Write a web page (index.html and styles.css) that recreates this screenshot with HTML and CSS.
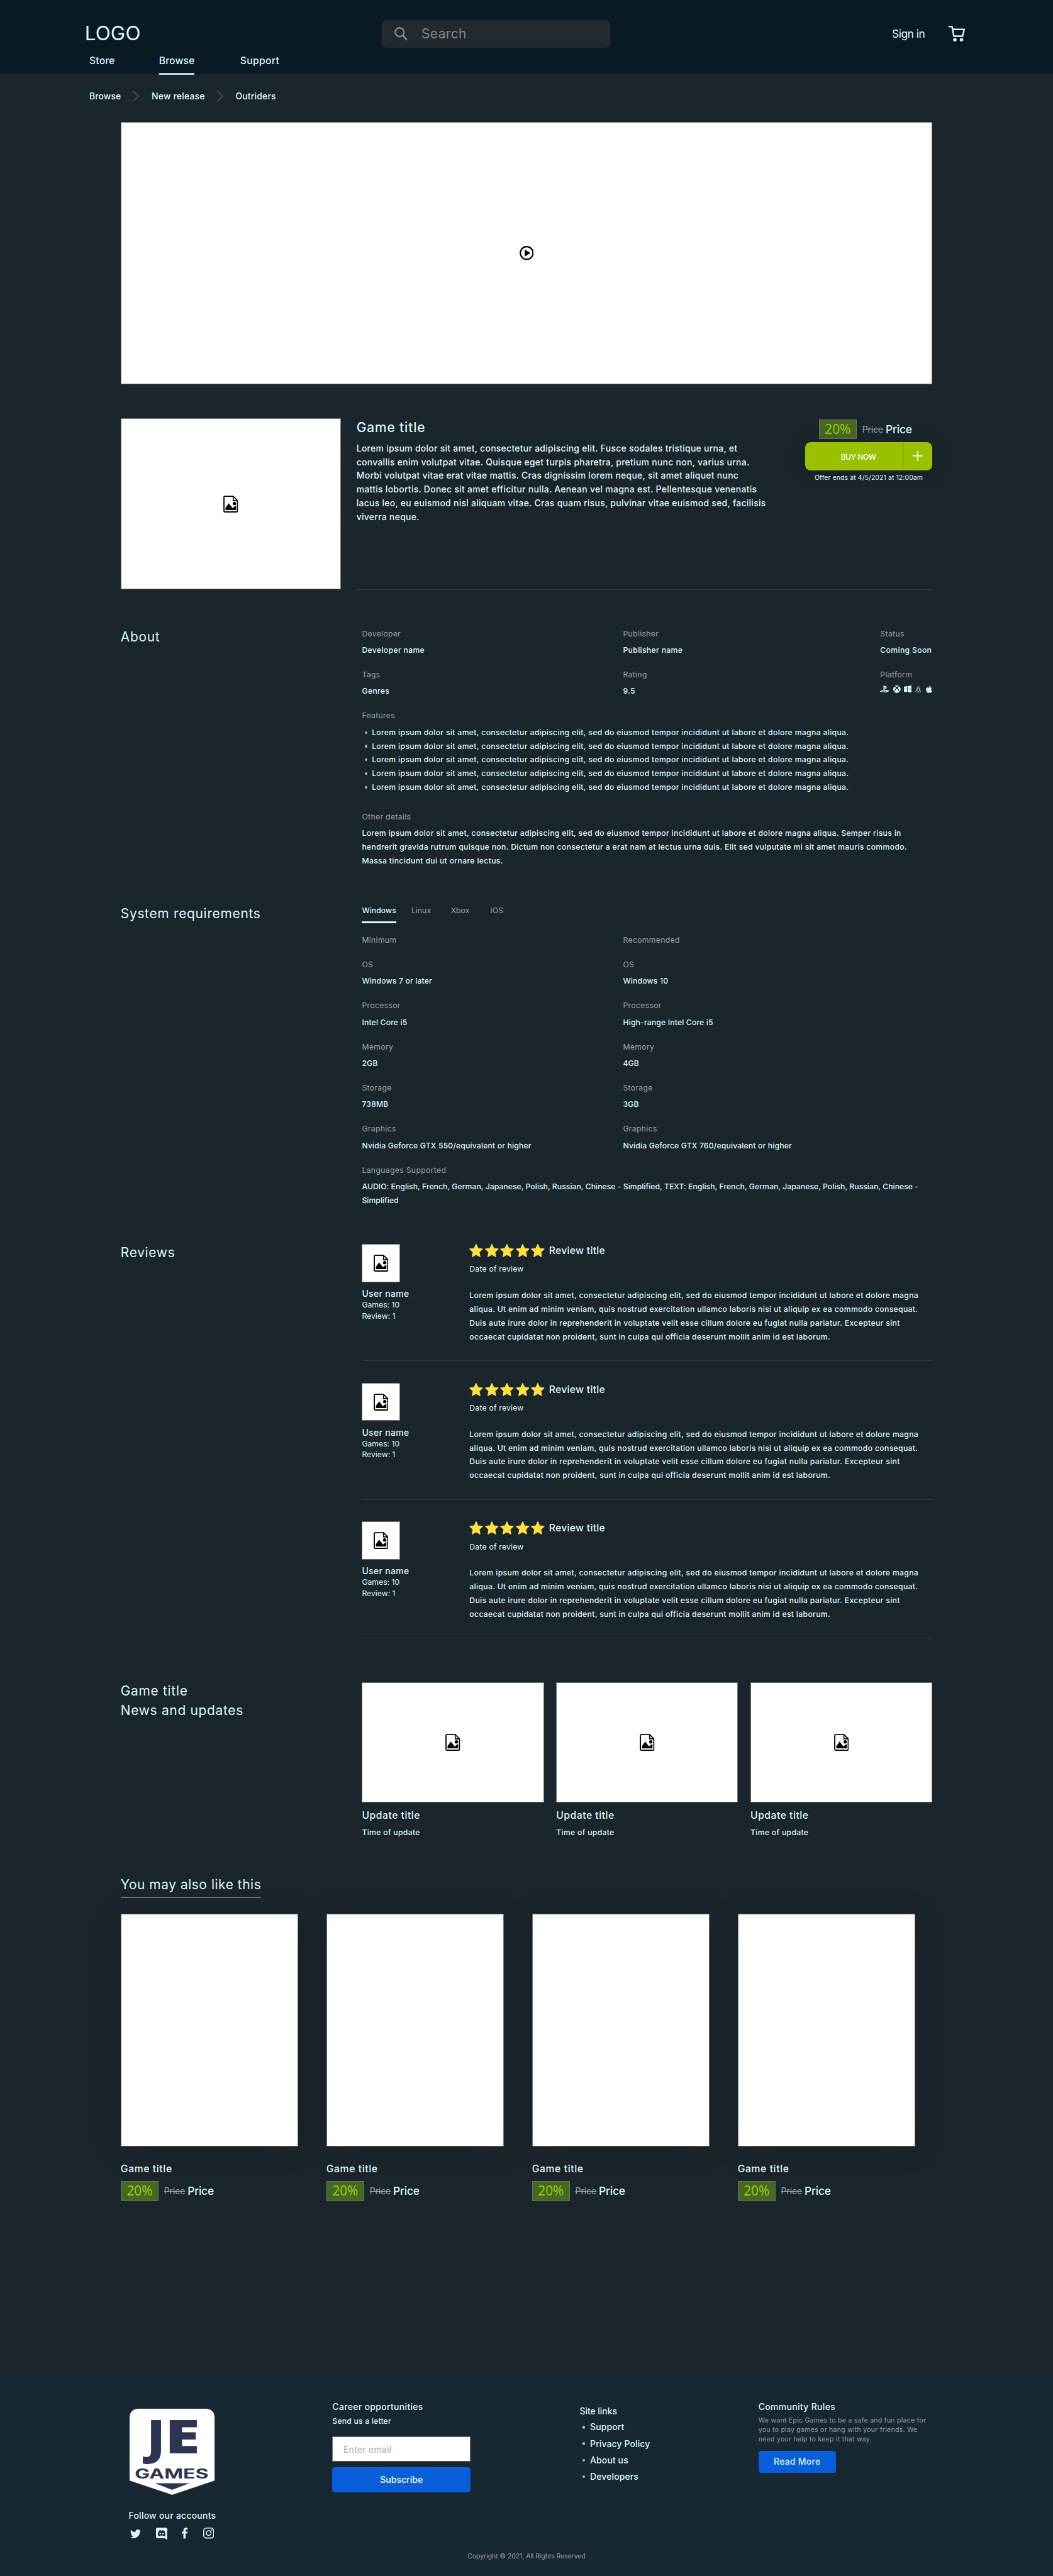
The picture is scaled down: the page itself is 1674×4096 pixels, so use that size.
FILE: index.html
```html
<!DOCTYPE html>
<html lang="en">
<head>
<meta charset="utf-8">
<title>JE Games - Game title</title>
<link rel="stylesheet" href="styles.css">
</head>
<body>
<svg class="sprite" aria-hidden="true">
  <symbol id="i-image" viewBox="0 0 27 31">
    <path d="M3 1.200H18L25.800 9V28a1.800 1.800 0 0 1-1.800 1.800H3A1.800 1.800 0 0 1 1.200 28V3A1.800 1.800 0 0 1 3 1.200z" fill="none" stroke="currentColor" stroke-width="2.100"/>
    <path d="M18 1.200V9H25.800" fill="none" stroke="currentColor" stroke-width="1.800"/>
    <circle cx="20.200" cy="14.600" r="3"/>
    <path d="M4 26.500V22.500L10 14l7 9 3-2.500L23.200 18.500V26.500z"/>
  </symbol>
  <symbol id="i-star" viewBox="0 0 25 24.500">
    <path d="M12.500 .8L15.900 8.200 24 9.200 18 14.700 19.600 23.200 12.500 19.200 5.400 23.200 7 14.700 1 9.200 9.100 8.200z" stroke="currentColor" stroke-width="1.500" stroke-linejoin="round"/>
  </symbol>
</svg>

<header class="header">
  <div class="header-top">
    <a class="logo">LOGO</a>
    <div class="search">
      <svg viewBox="0 0 24 25"><circle cx="9.500" cy="9.500" r="8" fill="none" stroke="currentColor" stroke-width="2.800"/><path d="M15.500 15.500L22.500 23.500" stroke="currentColor" stroke-width="3.200"/></svg>
      <span>Search</span>
    </div>
    <a class="signin">Sign in</a>
    <svg class="cart" viewBox="0 0 30 29"><path d="M0 1.600H6.500L9.500 19H25.500L28.500 6.500H7.500" fill="none" stroke="currentColor" stroke-width="2.800" stroke-linejoin="round"/><circle cx="11.500" cy="25.500" r="3.200"/><circle cx="23.500" cy="25.500" r="3.200"/></svg>
  </div>
  <nav class="nav"><a>Store</a><a class="active">Browse</a><a class="wide">Support</a></nav>
</header>

<div class="crumbs">
  <span class="c1">Browse</span>
  <svg viewBox="0 0 11 20"><path d="M0.500 0.300L10.500 10L0.500 19.700"/></svg>
  <span class="c2">New release</span>
  <svg viewBox="0 0 11 20"><path d="M0.500 0.300L10.500 10L0.500 19.700"/></svg>
  <span>Outriders</span>
</div>

<main class="main">
  <div class="hero box">
    <svg class="play" viewBox="0 0 26 26"><circle cx="13" cy="13" r="11.600" fill="none" stroke="currentColor" stroke-width="2.600"/><path d="M9.500 6.800L20 13L9.500 19.200z"/></svg>
  </div>

  <section class="detail">
    <div class="cover box"><svg class="file"><use href="#i-image"/></svg></div>
    <div class="detail-body">
      <div class="intro">
        <h1>Game title</h1>
        <p>Lorem ipsum dolor sit amet, consectetur adipiscing elit. Fusce sodales tristique urna, et<br>convallis enim volutpat vitae. Quisque eget turpis pharetra, pretium nunc non, varius urna.<br>Morbi volutpat vitae erat vitae mattis. Cras dignissim lorem neque, sit amet aliquet nunc<br>mattis lobortis. Donec sit amet efficitur nulla. Aenean vel magna est. Pellentesque venenatis<br>lacus leo, eu euismod nisl aliquam vitae. Cras quam risus, pulvinar vitae euismod sed, facilisis<br>viverra neque.</p>
      </div>
      <div class="buy">
        <div class="price"><span class="off">20%</span><s>Price</s><b>Price</b></div>
        <div class="buy-btn"><span>BUY NOW</span><i><svg viewBox="0 0 18 18"><path d="M9 0V18M0 9H18"/></svg></i></div>
        <div class="offer">Offer ends at 4/5/2021 at 12:00am</div>
      </div>
    </div>
  </section>

  <section class="row about">
    <h2>About</h2>
    <div>
      <div class="cols">
        <dl><dt>Developer</dt><dd>Developer name</dd><dt>Tags</dt><dd>Genres</dd></dl>
        <dl><dt>Publisher</dt><dd>Publisher name</dd><dt>Rating</dt><dd>9.5</dd></dl>
        <dl><dt>Status</dt><dd>Coming Soon</dd><dt>Platform</dt>
          <dd class="platforms">
            <svg class="ps" viewBox="0 0 17 13"><path d="M6.300 0l3.400 1c1.700.6 2.400 1.300 2.400 3 0 1.800-1.100 2.500-2.600 1.800V2.600c0-.8-.9-.9-.9 0V13L6.300 12.200zM5.700 7.800v1.500L2.900 10.400c-.7.3 0 .8.700.5l2.100-.7v1.400c-1.700.5-3.500.5-5-.1-1-.5-.9-1.400.5-1.900zM9.200 8.600c2-.6 4.800-.8 6.800.2 1.200.5 1.200 1.400.1 1.800l-6.900 2.300v-1.600l5-1.700c.7-.3 0-.7-.7-.5L9.200 10.300z"/></svg>
            <svg class="xb" viewBox="0 0 13 13"><path d="M2.300 1.500C3.800.9 5.300 1.600 6.500 2.500 7.700 1.600 9.200.9 10.700 1.500 8.300-.5 4.700-.5 2.300 1.500zM1.700 2.200C-.7 5-.4 8.800 1.700 11 2 8.500 3.600 6.100 5.100 4.300 4 3 2.800 2 1.700 2.200zM11.300 2.200C13.700 5 13.400 8.800 11.300 11 11 8.500 9.400 6.100 7.900 4.300 9 3 10.200 2 11.300 2.200zM6.500 5.500C4.500 7.200 2.500 9.800 2.300 11.500c2.400 2 6 2 8.400 0C10.500 9.800 8.500 7.200 6.500 5.500z"/></svg>
            <svg class="win" viewBox="0 0 14 13"><path d="M0 2L6 1.100V6.200H0zM6.800 1L14 0V6.200H6.800zM0 6.900H6V12L0 11.200zM6.800 6.900H14V13L6.800 12z"/></svg>
            <svg class="tux" viewBox="0 0 11 13"><path d="M4 3.800C3.500.8 7.500.8 7 3.800 7 5.500 9 7 9.300 9.500L10.300 11 8 12.400H3L.7 11 1.800 9.500C2 7 4 5.500 4 3.800zM4.300 4.500L3.300 8.500C3.500 10 4 11 5.500 11S7.500 10 7.800 8.500L6.800 4.500" fill="none" stroke="currentColor" stroke-width=".8"/></svg>
            <svg class="apl" viewBox="0 0 12 14"><path d="M8.600 0C8.700 1.700 7.300 3.200 5.900 3.200 5.800 1.700 7.200.2 8.600 0zM11.400 4.900C9 6.400 9.500 9.200 11.800 10.200 11 12.300 9.900 14 8.600 14 7.600 14 7.400 13.400 6.200 13.400S4.600 14 3.700 14C1.500 13.500-.4 9 .5 6.300 1 4.500 2.400 3.600 3.800 3.600 4.800 3.600 5.500 4.200 6.300 4.200S7.700 3.500 9 3.500C10 3.600 10.800 4 11.400 4.900z"/></svg>
          </dd></dl>
      </div>
      <dl>
        <dt>Features</dt>
        <dd><ul class="features">
          <li>Lorem ipsum dolor sit amet, consectetur adipiscing elit, sed do eiusmod tempor incididunt ut labore et dolore magna aliqua.</li>
          <li>Lorem ipsum dolor sit amet, consectetur adipiscing elit, sed do eiusmod tempor incididunt ut labore et dolore magna aliqua.</li>
          <li>Lorem ipsum dolor sit amet, consectetur adipiscing elit, sed do eiusmod tempor incididunt ut labore et dolore magna aliqua.</li>
          <li>Lorem ipsum dolor sit amet, consectetur adipiscing elit, sed do eiusmod tempor incididunt ut labore et dolore magna aliqua.</li>
          <li>Lorem ipsum dolor sit amet, consectetur adipiscing elit, sed do eiusmod tempor incididunt ut labore et dolore magna aliqua.</li>
        </ul></dd>
        <dt>Other details</dt>
        <dd>Lorem ipsum dolor sit amet, consectetur adipiscing elit, sed do eiusmod tempor incididunt ut labore et dolore magna aliqua. Semper risus in<br>hendrerit gravida rutrum quisque non. Dictum non consectetur a erat nam at lectus urna duis. Elit sed vulputate mi sit amet mauris commodo.<br>Massa tincidunt dui ut ornare lectus.</dd>
      </dl>
    </div>
  </section>

  <section class="row system">
    <h2>System requirements</h2>
    <div>
      <div class="tabs"><span class="active">Windows</span><span>Linux</span><span>Xbox</span><span>IOS</span></div>
      <div class="cols two">
        <dl><dt class="solo">Minimum</dt><dt>OS</dt><dd class="mid">Windows 7 or later</dd><dt>Processor</dt><dd class="mid">Intel Core i5</dd><dt>Memory</dt><dd class="mid">2GB</dd><dt>Storage</dt><dd class="mid">738MB</dd><dt>Graphics</dt><dd class="mid">Nvidia Geforce GTX 550/equivalent or higher</dd></dl>
        <dl><dt class="solo">Recommended</dt><dt>OS</dt><dd class="mid">Windows 10</dd><dt>Processor</dt><dd class="mid">High-range Intel Core i5</dd><dt>Memory</dt><dd class="mid">4GB</dd><dt>Storage</dt><dd class="mid">3GB</dd><dt>Graphics</dt><dd class="mid">Nvidia Geforce GTX 760/equivalent or higher</dd></dl>
      </div>
      <dl><dt>Languages Supported</dt><dd class="langs">AUDIO: English, French, German, Japanese, Polish, Russian, Chinese - Simplified, TEXT: English, French, German, Japanese, Polish, Russian, Chinese -<br>Simplified</dd></dl>
    </div>
  </section>

  <section class="row reviews">
    <h2>Reviews</h2>
    <div>
      <article class="review">
        <div class="user"><div class="avatar box"><svg class="file"><use href="#i-image"/></svg></div><strong>User name</strong><span>Games: 10</span><span>Review: 1</span></div>
        <div class="review-body">
          <div class="rate"><svg><use href="#i-star"/></svg><svg><use href="#i-star"/></svg><svg><use href="#i-star"/></svg><svg><use href="#i-star"/></svg><svg><use href="#i-star"/></svg><h3>Review title</h3></div>
          <time>Date of review</time>
          <p>Lorem ipsum dolor sit amet, consectetur adipiscing elit, sed do eiusmod tempor incididunt ut labore et dolore magna<br>aliqua. Ut enim ad minim veniam, quis nostrud exercitation ullamco laboris nisi ut aliquip ex ea commodo consequat.<br>Duis aute irure dolor in reprehenderit in voluptate velit esse cillum dolore eu fugiat nulla pariatur. Excepteur sint<br>occaecat cupidatat non proident, sunt in culpa qui officia deserunt mollit anim id est laborum.</p>
        </div>
      </article>
      <article class="review">
        <div class="user"><div class="avatar box"><svg class="file"><use href="#i-image"/></svg></div><strong>User name</strong><span>Games: 10</span><span>Review: 1</span></div>
        <div class="review-body">
          <div class="rate"><svg><use href="#i-star"/></svg><svg><use href="#i-star"/></svg><svg><use href="#i-star"/></svg><svg><use href="#i-star"/></svg><svg><use href="#i-star"/></svg><h3>Review title</h3></div>
          <time>Date of review</time>
          <p>Lorem ipsum dolor sit amet, consectetur adipiscing elit, sed do eiusmod tempor incididunt ut labore et dolore magna<br>aliqua. Ut enim ad minim veniam, quis nostrud exercitation ullamco laboris nisi ut aliquip ex ea commodo consequat.<br>Duis aute irure dolor in reprehenderit in voluptate velit esse cillum dolore eu fugiat nulla pariatur. Excepteur sint<br>occaecat cupidatat non proident, sunt in culpa qui officia deserunt mollit anim id est laborum.</p>
        </div>
      </article>
      <article class="review">
        <div class="user"><div class="avatar box"><svg class="file"><use href="#i-image"/></svg></div><strong>User name</strong><span>Games: 10</span><span>Review: 1</span></div>
        <div class="review-body">
          <div class="rate"><svg><use href="#i-star"/></svg><svg><use href="#i-star"/></svg><svg><use href="#i-star"/></svg><svg><use href="#i-star"/></svg><svg><use href="#i-star"/></svg><h3>Review title</h3></div>
          <time>Date of review</time>
          <p>Lorem ipsum dolor sit amet, consectetur adipiscing elit, sed do eiusmod tempor incididunt ut labore et dolore magna<br>aliqua. Ut enim ad minim veniam, quis nostrud exercitation ullamco laboris nisi ut aliquip ex ea commodo consequat.<br>Duis aute irure dolor in reprehenderit in voluptate velit esse cillum dolore eu fugiat nulla pariatur. Excepteur sint<br>occaecat cupidatat non proident, sunt in culpa qui officia deserunt mollit anim id est laborum.</p>
        </div>
      </article>
    </div>
  </section>

  <section class="row news">
    <h2>Game title<br>News and updates</h2>
    <div class="updates">
      <article><div class="shot box"><svg class="file"><use href="#i-image"/></svg></div><h3>Update title</h3><time>Time of update</time></article>
      <article><div class="shot box"><svg class="file"><use href="#i-image"/></svg></div><h3>Update title</h3><time>Time of update</time></article>
      <article><div class="shot box"><svg class="file"><use href="#i-image"/></svg></div><h3>Update title</h3><time>Time of update</time></article>
    </div>
  </section>

  <section class="also">
    <h2>You may also like this</h2>
    <div class="games">
      <article><div class="art box"></div><h3>Game title</h3><div class="price"><span class="off">20%</span><s>Price</s><b>Price</b></div></article>
      <article><div class="art box"></div><h3>Game title</h3><div class="price"><span class="off">20%</span><s>Price</s><b>Price</b></div></article>
      <article><div class="art box"></div><h3>Game title</h3><div class="price"><span class="off">20%</span><s>Price</s><b>Price</b></div></article>
      <article><div class="art box"></div><h3>Game title</h3><div class="price"><span class="off">20%</span><s>Price</s><b>Price</b></div></article>
    </div>
  </section>
</main>

<footer class="footer">
  <div class="footer-cols">
    <div class="brand">
      <svg class="shield" viewBox="0 0 155 157">
        <path d="M18 0H137Q155 0 155 17V131L77.500 157L0 131V17Q0 0 18 0z" fill="#fff"/>
        <text x="31.500" y="81" class="je" textLength="33" lengthAdjust="spacingAndGlyphs">J</text>
        <text x="64.300" y="81" class="je" textLength="64" lengthAdjust="spacingAndGlyphs">E</text>
        <text x="9.500" y="127" class="je-g" textLength="134.500" lengthAdjust="spacingAndGlyphs">GAMES</text>
        <path d="M46 136H109L77.500 148z" fill="#2d3552"/>
      </svg>
      <h4>Follow our accounts</h4>
      <div class="social">
        <svg class="tw" viewBox="0 0 24 19.500"><path d="M24 2.300a10 10 0 0 1-2.800.8A5 5 0 0 0 23.300.4a10 10 0 0 1-3.100 1.200A4.900 4.900 0 0 0 11.800 6 14 14 0 0 1 1.700.9a4.900 4.900 0 0 0 1.500 6.600A5 5 0 0 1 1 6.900a4.900 4.900 0 0 0 3.900 4.900 5 5 0 0 1-2.200.1 4.900 4.900 0 0 0 4.600 3.400A9.900 9.900 0 0 1 0 17.300a14 14 0 0 0 21.500-12.400A10 10 0 0 0 24 2.300z"/></svg>
        <svg class="dc" viewBox="0 0 21 23"><path fill-rule="evenodd" d="M2.400 0H18.600A2.400 2.400 0 0 1 21 2.400V23L16.500 19.600H2.400A2.400 2.400 0 0 1 0 17.200V2.400A2.400 2.400 0 0 1 2.400 0zM5.200 5.800Q3.400 9.500 3.500 14q1.500 1.700 3.800 1.700l.9-1.200q2.300.6 4.600 0l.9 1.200q2.300 0 3.800-1.700.1-4.500-1.700-8.200-1.500-1.100-3.300-1.200l-.5.700q-1.500-.2-3 0l-.5-.7Q6.700 4.700 5.200 5.800z"/><circle cx="8" cy="11" r="1.500"/><circle cx="13" cy="11" r="1.500"/></svg>
        <svg class="fb" viewBox="0 0 11 20"><path d="M3 20V11H0V7.500H3V5C3 1.800 4.900 0 7.800 0 9.200 0 10.700.3 10.700.3V3.300H9.100C7.500 3.300 7 4.300 7 5.300V7.500H10.500L9.900 11H7V20z"/></svg>
        <svg class="ig" viewBox="0 0 20 20"><rect x=".9" y=".9" width="18.200" height="18.200" rx="5"/><circle cx="10" cy="10" r="4.300"/><circle cx="15.300" cy="4.700" r=".5"/></svg>
      </div>
    </div>
    <div class="career">
      <h4>Career opportunities</h4>
      <p>Send us a letter</p>
      <div class="field">Enter email</div>
      <div class="btn">Subscribe</div>
    </div>
    <div class="links">
      <h4>Site links</h4>
      <ul><li>Support</li><li>Privacy Policy</li><li>About us</li><li>Developers</li></ul>
    </div>
    <div class="rules">
      <h4>Community Rules</h4>
      <p>We want Epic Games to be a safe and fun place for<br>you to play games or hang with your friends. We<br>need your help to keep it that way.</p>
      <div class="btn small">Read More</div>
    </div>
  </div>
  <div class="copy">Copyright © 2021, All Rights Reserved</div>
</footer>
</body>
</html>
```
FILE: styles.css
```css
/* 1rem = 10 design pixels of the 1920px layout */
html { font-size: 8.71875px; }
* { box-sizing: border-box; margin: 0; padding: 0; }
body {
  width: 192rem;
  height: 4096px;
  overflow: hidden;
  background: #1b262c;
  color: #def5fc;
  font: 500 1.4rem/2.5rem Inter, "Liberation Sans", sans-serif;
  letter-spacing: .0275em;
  white-space: nowrap;
  display: flex;
  flex-direction: column;
}
.sprite { position: absolute; width: 0; height: 0; }
svg { display: block; fill: currentColor; flex: none; }
ul { list-style: none; }
h1, h2, h3, h4, strong, b { font-weight: 500; }
.box {
  background: #fff;
  border: 1px solid #707070;
  color: #000;
  display: flex;
  align-items: center;
  justify-content: center;
}
.file { width: 2.7rem; height: 3.1rem; }

/* header */
.header { flex: none; height: 13.5rem; padding: 3.7rem 0 0 15.75rem; background: #091a23; }
.header-top { display: grid; grid-template-columns: 53.9rem 93rem 10.3rem auto; align-items: center; height: 5rem; }
.logo { font-size: 3.6rem; font-weight: 400; letter-spacing: .005em; line-height: 5rem; margin-left: -.3rem; }
.search {
  width: 41.6rem;
  height: 5rem;
  border-radius: .8rem;
  background: #22292f;
  color: #868686;
  display: flex;
  align-items: center;
  gap: 2.5rem;
  padding-left: 2.3rem;
  font-size: 2.4rem;
  font-weight: 400;
  letter-spacing: .02em;
}
.search svg { width: 2.4rem; height: 2.5rem; }
.signin { font-size: 2rem; font-weight: 400; letter-spacing: -.03em; }
.cart { width: 3rem; height: 2.9rem; }
.nav { display: grid; grid-template-columns: 12.7rem 14.8rem auto; justify-items: start; margin-top: 1.2rem; padding-left: .55rem; font-size: 1.8rem; letter-spacing: .007em; }
.nav a { height: 3.8rem; }
.nav .active { border-bottom: .4rem solid #b9d8e2; }
.nav .wide { letter-spacing: .02em; }

.crumbs { flex: none; display: flex; align-items: center; height: 8.7rem; padding: 0 0 .6rem 16.3rem; font-size: 1.6rem; letter-spacing: .013em; }
.crumbs svg { width: 1.1rem; height: 2rem; fill: none; stroke: #8f9ca2; stroke-width: 1; margin-right: 2.3rem; }
.c1 { width: 7.95rem; letter-spacing: .0045em; }
.c2 { width: 11.9rem; }

.main { flex: none; width: 148rem; height: 411.1rem; margin-left: 22rem; }
.hero { height: 47.9rem; }
.play { width: 2.6rem; height: 2.6rem; }

/* detail */
.detail { display: grid; grid-template-columns: 40.2rem 105rem; justify-content: space-between; margin-top: 6.2rem; height: 31.3rem; }
.cover { height: 31.2rem; }
.detail-body { display: flex; justify-content: space-between; border-bottom: 1px solid #323c41; }
h1 { font-size: 2.4rem; line-height: 3.6rem; letter-spacing: .042em; margin-top: -.15rem; }
.intro p { font-size: 1.6rem; letter-spacing: .0205em; margin-top: .75rem; }
.buy { width: 23.2rem; padding-top: .2rem; display: flex; flex-direction: column; align-items: center; }
.price { display: flex; align-items: center; }
.off {
  width: 6.9rem;
  height: 3.6rem;
  line-height: 3.4rem;
  border: 1px solid #707070;
  background: #486820;
  color: #9bcc1d;
  font-family: "Open Sans", "Liberation Sans", sans-serif;
  font-size: 2.4rem;
  font-weight: 400;
  letter-spacing: -.004em;
  text-align: center;
  margin-right: 1rem;
}
s { color: #98a1a5; font-size: 1.6rem; font-weight: 400; letter-spacing: -.004em; width: 4.3rem; }
b { font-size: 2rem; letter-spacing: -.012em; }
.buy .price { margin-left: -1.2rem; }
.buy-btn { display: flex; width: 23.1rem; height: 5.2rem; margin-top: .5rem; border-radius: 1rem; background: #99c100; color: #fff; box-shadow: 0 .3rem 3rem rgba(0, 0, 0, .16); }
.buy-btn span { width: 17.8rem; padding-left: 1.5rem; text-align: center; line-height: 5.4rem; letter-spacing: -.044em; }
.buy-btn i { width: 5.3rem; height: 4.5rem; margin-top: .3rem; border-left: 1px solid #7f9f0a; display: flex; align-items: center; padding-left: 1.7rem; }
.buy-btn svg { width: 1.8rem; height: 1.8rem; stroke: #fff; stroke-width: 2; }
.offer { font-size: 1.2rem; font-weight: 400; letter-spacing: .01em; line-height: 2rem; margin-top: .37rem; }

/* label column + content */
.row { display: grid; grid-template-columns: 44rem 104rem; align-items: start; }
h2 { font-size: 2.4rem; font-weight: 400; line-height: 3.6rem; letter-spacing: .0335em; }
.about { margin-top: 6.49rem; height: 50.7rem; }
.about h2 { margin-top: .3rem; }
.cols { display: grid; grid-template-columns: 47.6rem 46.9rem auto; }
dt { font-weight: 400; line-height: 3rem; color: #9ba4a7; }
dd { padding: .25rem 0; margin-bottom: 1.5rem; }
.solo { margin-bottom: 1.5rem; }
.features { margin-bottom: 2.4rem; }
dd:has(.features) { margin-bottom: 0; }
.features li { display: flex; align-items: center; }
.features li::before, .links li::before { content: ""; width: .5rem; height: .5rem; border-radius: 50%; background: #a9b8be; margin: 0 .8rem 0 .5rem; }
.platforms { display: flex; align-items: center; height: 3rem; padding-bottom: 1.05rem; }
.ps { width: 1.7rem; height: 1.3rem; margin-right: .65rem; }
.xb { width: 1.35rem; height: 1.35rem; margin-right: .6rem; }
.win { width: 1.4rem; height: 1.3rem; margin-right: .7rem; }
.tux { width: 1.1rem; height: 1.3rem; margin-right: .8rem; }
.apl { width: 1.15rem; height: 1.35rem; }

.system { height: 62.11rem; }
.tabs { display: flex; font-weight: 400; color: #9ba4a7; letter-spacing: .005em; margin-bottom: 1.54rem; }
.tabs span { height: 3.61rem; }
.tabs span:nth-child(2) { margin-left: 2.7rem; width: 7.2rem; }
.tabs span:nth-child(3) { width: 7.2rem; }
.tabs .active { width: 6.3rem; font-weight: 500; color: #def5fc; border-bottom: .4rem solid #def5fc; }
.two { grid-template-columns: 47.6rem auto; }
.mid { letter-spacing: .013em; }
.langs { letter-spacing: .0032em; }

/* reviews */
.reviews { height: 79.95rem; }
.reviews h2 { margin-top: -.3rem; }
.review { display: grid; grid-template-columns: 19.6rem auto; height: 21.3rem; border-bottom: .2rem solid #303a40; margin-bottom: 4rem; }
.avatar { width: 6.9rem; height: 6.95rem; }
.user strong, .user span { display: block; line-height: 2rem; }
.user strong { font-size: 1.6rem; margin: 1.07rem 0 .07rem; }
.user span { font-weight: 400; letter-spacing: 0; }
.rate { display: flex; gap: .3rem; height: 2.45rem; color: #ffe042; }
.rate svg { width: 2.5rem; height: 2.45rem; }
h3 { font-size: 1.8rem; letter-spacing: .033em; }
.rate h3 { color: #def5fc; letter-spacing: .019em; margin-left: .5rem; }
time { display: block; font-weight: 400; letter-spacing: .0175em; }
.rate + time { margin: .89rem 0 2.3rem; }

/* news */
.news { height: 35.08rem; }
.news h2 { line-height: 3.55rem; margin-top: -.1rem; }
.updates { display: grid; grid-template-columns: repeat(3, 1fr); gap: 2.25rem; }
.shot { height: 21.85rem; }
.updates h3 { line-height: 3rem; margin: .9rem 0 .39rem; }
.updates time { font-weight: 500; letter-spacing: .025em; }

/* recommendations */
.also h2 { display: inline-block; border-bottom: .3rem solid #707070; padding-bottom: .4rem; letter-spacing: .026em; vertical-align: top; }
.games { display: grid; grid-template-columns: repeat(4, 32.4rem); gap: 5.1rem; margin-top: 2.87rem; }
.art { height: 42.45rem; box-shadow: 0 .3rem 5rem rgba(0, 0, 0, .16); }
.games h3 { line-height: 3rem; margin: 2.6rem 0 .75rem; letter-spacing: .039em; }

/* footer */
.footer { flex: 1; background: #172833; }
h4 { font-size: 1.6rem; letter-spacing: .025em; }
.footer-cols { display: grid; grid-template-columns: 37.15rem 45.1rem 32.6rem auto; height: 31.86rem; padding-left: 23.45rem; }
.brand { padding-top: 6rem; }
.shield { width: 15.5rem; height: 15.7rem; margin-left: .15rem; overflow: visible; }
.shield text { fill: #2d3552; font-family: "Open Sans", "Liberation Sans", sans-serif; font-weight: 800; font-size: 84.5px; letter-spacing: 0; }
.shield .je-g { font-family: Inter, "Liberation Sans", sans-serif; font-weight: 700; font-size: 24px; }
.brand h4 { margin-top: 2.47rem; letter-spacing: .019em; }
.social { display: flex; margin-top: 1.05rem; }
.tw { width: 1.95rem; height: 1.6rem; margin: .3rem 2.8rem 0 .3rem; }
.dc { width: 2.05rem; height: 2.3rem; margin-right: 2.65rem; }
.fb { width: 1.1rem; height: 2rem; margin-right: 2.7rem; }
.ig { width: 2rem; height: 2rem; fill: none; stroke: currentColor; stroke-width: 1.8; }
.career, .rules { padding-top: 4.37rem; }
.career p { margin-top: .17rem; letter-spacing: .016em; }
.field { width: 25.2rem; height: 4.6rem; line-height: 4.5rem; margin-top: 1.46rem; padding-left: 1.9rem; background: #fff; border: 1px solid #707070; color: #a9a9a9; font-size: 1.6rem; font-weight: 400; letter-spacing: .022em; }
.btn { width: 25.2rem; height: 4.6rem; line-height: 4.6rem; margin-top: 1rem; border-radius: .5rem; background: #0b5ed9; color: #fff; font-size: 1.6rem; letter-spacing: .004em; text-align: center; }
.links { padding-top: 5.17rem; }
.links h4 { letter-spacing: -.003em; }
.links ul { margin-top: .2rem; }
.links li { display: flex; align-items: center; line-height: 3rem; font-size: 1.6rem; letter-spacing: .009em; }
.links li::before { margin: 0 .9rem 0 .5rem; }
.rules p { font-size: 1.2rem; font-weight: 400; line-height: 1.7rem; letter-spacing: .028em; color: #98a0a4; margin-top: .54rem; }
.btn.small { width: 14.1rem; height: 4rem; line-height: 4rem; margin-top: 1.19rem; letter-spacing: .02em; color: #def5fc; }
.copy { text-align: center; font-size: 1.2rem; font-weight: 400; line-height: 2rem; letter-spacing: -.004em; color: #98a0a4; }
```
